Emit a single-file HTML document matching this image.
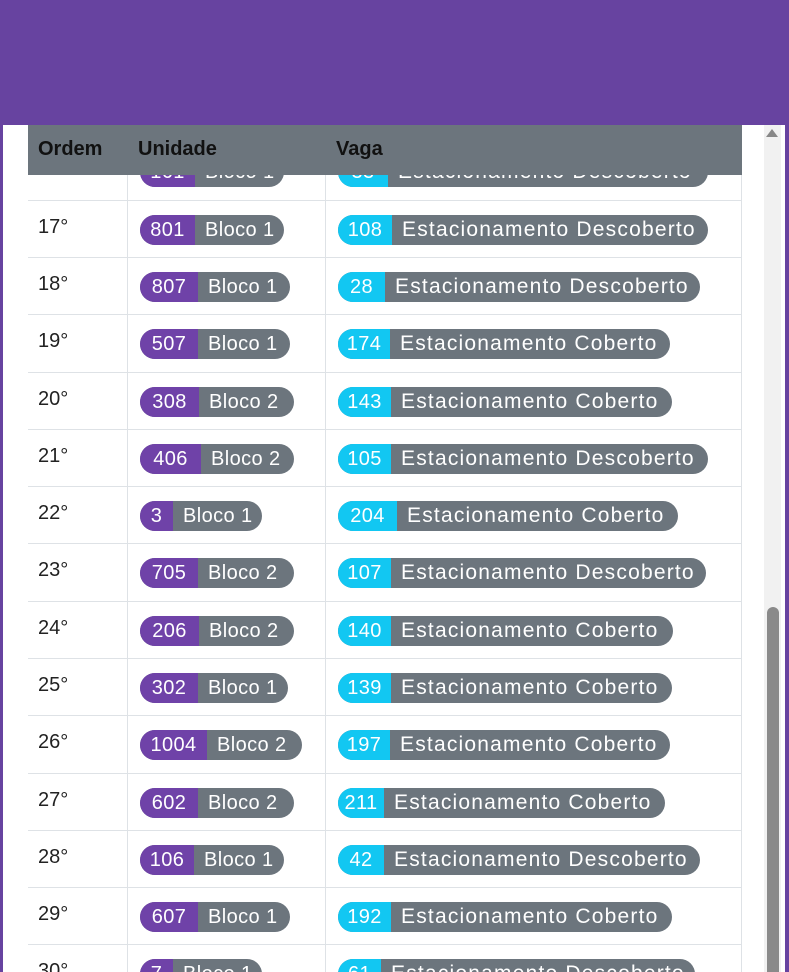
<!DOCTYPE html>
<html><head><meta charset="utf-8"><style>
*{margin:0;padding:0;box-sizing:border-box}
html,body{width:789px;height:972px;overflow:hidden}
body{background:#6743a0;font-family:"Liberation Sans",sans-serif;position:relative}
.panel{position:absolute;left:3px;top:125px;width:782px;height:847px;background:#fff}
.hdr{position:absolute;left:28px;top:125px;width:714px;height:50px;background:#6c757d;z-index:3}
.hdr span{position:absolute;top:13px;font-weight:bold;font-size:20px;color:#111}
.body{position:absolute;left:28px;top:175px;width:714px;height:797px;overflow:hidden}
.row{position:absolute;left:0;width:714px;height:58px;border-top:1px solid #dee2e6}
.vl{position:absolute;top:0;width:1px;height:797px;background:#dee2e6}
.ord{position:absolute;left:10px;top:15px;font-size:20px;color:#222}
.b{position:absolute;top:14px;height:30px;border-radius:15px;overflow:hidden;display:flex;background:#6c757d;color:#fff;font-size:20px;line-height:30px;letter-spacing:0.4px;white-space:nowrap}
.b i{font-style:normal;display:block;text-align:center;height:30px}
.p{background:#6f42a8}.c{background:#12c7f2}
.b em{font-style:normal;flex:1;text-align:left;padding-left:10px}
.v em{font-size:21px;letter-spacing:1.2px}
.track{position:absolute;left:764px;top:125px;width:17px;height:847px;background:#f1f1f1}
.thumb{position:absolute;left:767px;top:607px;width:12px;height:365px;border-radius:6px 6px 0 0;background:#8a8a8a}
.arr{position:absolute;left:766px;top:129px;width:0;height:0;border-left:6px solid transparent;border-right:6px solid transparent;border-bottom:8px solid #888}
</style></head><body>
<div class="panel"></div>
<div class="hdr"><span style="left:10px">Ordem</span><span style="left:110px">Unidade</span><span style="left:308px">Vaga</span></div>
<div class="body">
<div class="vl" style="left:99px"></div><div class="vl" style="left:297px"></div><div class="vl" style="left:713px"></div>
<div class="row" style="top:-33px"><div class="b" style="left:112px;width:144px"><i class="p" style="width:55px">161</i><em>Bloco 1</em></div><div class="b v" style="left:310px;width:370px"><i class="c" style="width:50px">33</i><em>Estacionamento Descoberto</em></div></div>
<div class="row" style="top:25px"><span class="ord">17°</span><div class="b" style="left:112px;width:144px"><i class="p" style="width:55px">801</i><em>Bloco 1</em></div><div class="b v" style="left:310px;width:370px"><i class="c" style="width:54px">108</i><em>Estacionamento Descoberto</em></div></div>
<div class="row" style="top:82px"><span class="ord">18°</span><div class="b" style="left:112px;width:150px"><i class="p" style="width:58px">807</i><em>Bloco 1</em></div><div class="b v" style="left:310px;width:362px"><i class="c" style="width:47px">28</i><em>Estacionamento Descoberto</em></div></div>
<div class="row" style="top:139px"><span class="ord">19°</span><div class="b" style="left:112px;width:150px"><i class="p" style="width:58px">507</i><em>Bloco 1</em></div><div class="b v" style="left:310px;width:332px"><i class="c" style="width:52px">174</i><em>Estacionamento Coberto</em></div></div>
<div class="row" style="top:197px"><span class="ord">20°</span><div class="b" style="left:112px;width:154px"><i class="p" style="width:59px">308</i><em>Bloco 2</em></div><div class="b v" style="left:310px;width:334px"><i class="c" style="width:53px">143</i><em>Estacionamento Coberto</em></div></div>
<div class="row" style="top:254px"><span class="ord">21°</span><div class="b" style="left:112px;width:154px"><i class="p" style="width:61px">406</i><em>Bloco 2</em></div><div class="b v" style="left:310px;width:370px"><i class="c" style="width:53px">105</i><em>Estacionamento Descoberto</em></div></div>
<div class="row" style="top:311px"><span class="ord">22°</span><div class="b" style="left:112px;width:122px"><i class="p" style="width:33px">3</i><em>Bloco 1</em></div><div class="b v" style="left:310px;width:340px"><i class="c" style="width:59px">204</i><em>Estacionamento Coberto</em></div></div>
<div class="row" style="top:368px"><span class="ord">23°</span><div class="b" style="left:112px;width:154px"><i class="p" style="width:58px">705</i><em>Bloco 2</em></div><div class="b v" style="left:310px;width:368px"><i class="c" style="width:53px">107</i><em>Estacionamento Descoberto</em></div></div>
<div class="row" style="top:426px"><span class="ord">24°</span><div class="b" style="left:112px;width:154px"><i class="p" style="width:59px">206</i><em>Bloco 2</em></div><div class="b v" style="left:310px;width:335px"><i class="c" style="width:53px">140</i><em>Estacionamento Coberto</em></div></div>
<div class="row" style="top:483px"><span class="ord">25°</span><div class="b" style="left:112px;width:148px"><i class="p" style="width:58px">302</i><em>Bloco 1</em></div><div class="b v" style="left:310px;width:334px"><i class="c" style="width:53px">139</i><em>Estacionamento Coberto</em></div></div>
<div class="row" style="top:540px"><span class="ord">26°</span><div class="b" style="left:112px;width:162px"><i class="p" style="width:67px">1004</i><em>Bloco 2</em></div><div class="b v" style="left:310px;width:332px"><i class="c" style="width:52px">197</i><em>Estacionamento Coberto</em></div></div>
<div class="row" style="top:598px"><span class="ord">27°</span><div class="b" style="left:112px;width:154px"><i class="p" style="width:58px">602</i><em>Bloco 2</em></div><div class="b v" style="left:310px;width:327px"><i class="c" style="width:46px">211</i><em>Estacionamento Coberto</em></div></div>
<div class="row" style="top:655px"><span class="ord">28°</span><div class="b" style="left:112px;width:144px"><i class="p" style="width:54px">106</i><em>Bloco 1</em></div><div class="b v" style="left:310px;width:362px"><i class="c" style="width:46px">42</i><em>Estacionamento Descoberto</em></div></div>
<div class="row" style="top:712px"><span class="ord">29°</span><div class="b" style="left:112px;width:150px"><i class="p" style="width:58px">607</i><em>Bloco 1</em></div><div class="b v" style="left:310px;width:334px"><i class="c" style="width:53px">192</i><em>Estacionamento Coberto</em></div></div>
<div class="row" style="top:769px"><span class="ord">30°</span><div class="b" style="left:112px;width:122px"><i class="p" style="width:33px">7</i><em>Bloco 1</em></div><div class="b v" style="left:310px;width:357px"><i class="c" style="width:43px">61</i><em>Estacionamento Descoberto</em></div></div>
</div>
<div class="track"></div><div class="arr"></div><div class="thumb"></div>
</body></html>
